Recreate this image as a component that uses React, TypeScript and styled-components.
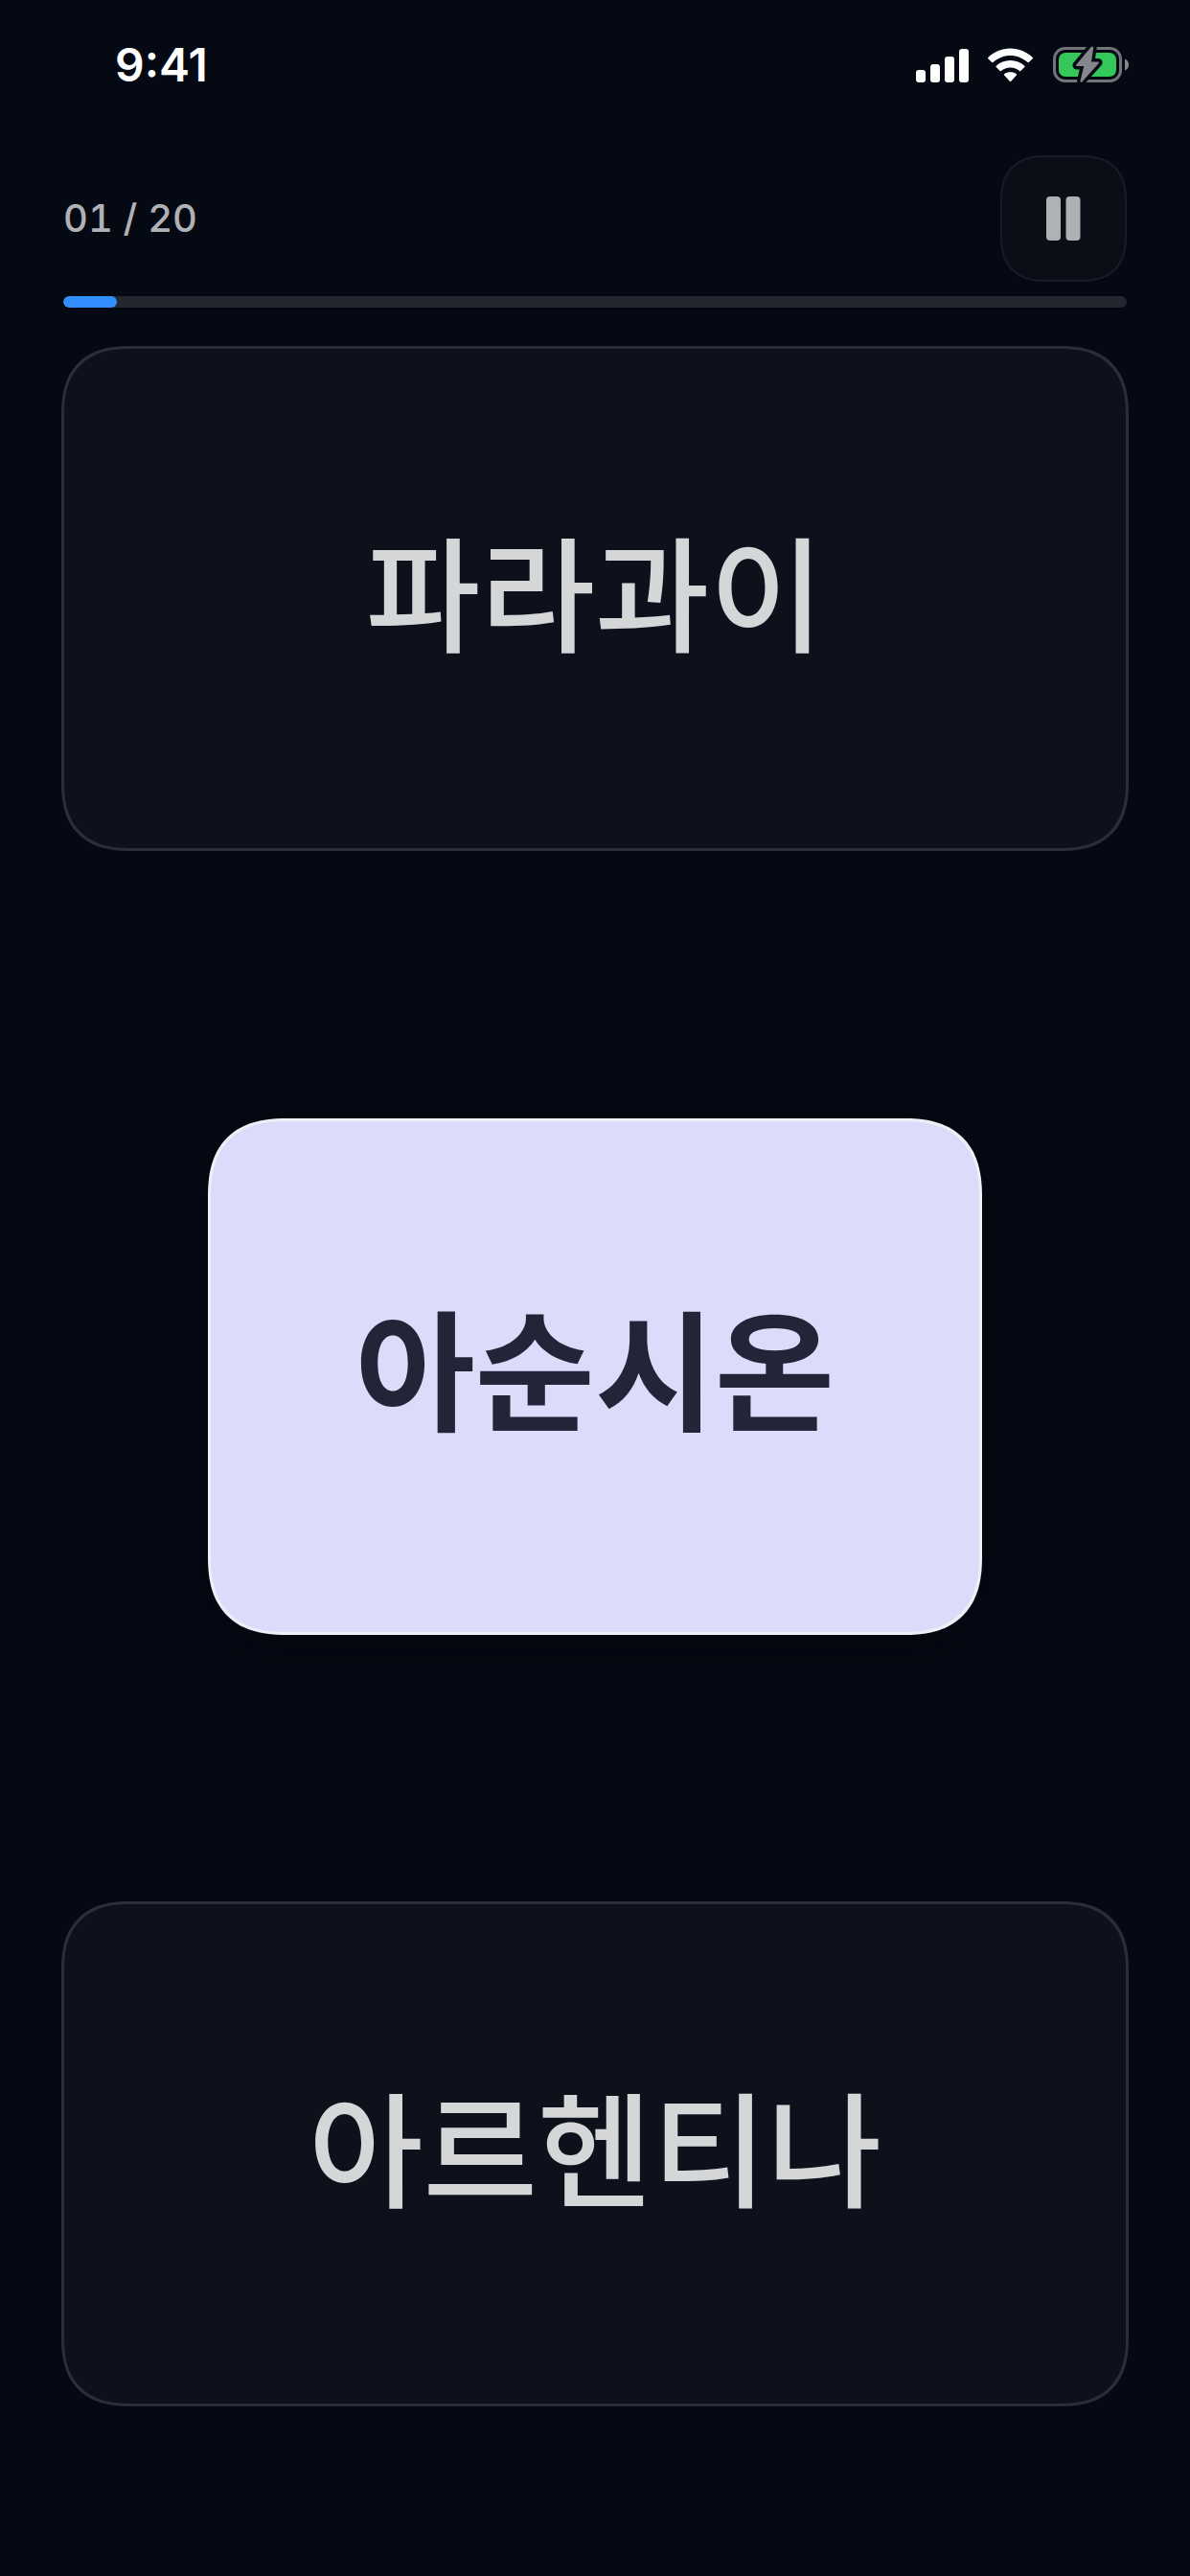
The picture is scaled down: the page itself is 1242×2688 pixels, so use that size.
import React from "react";
import styled, { createGlobalStyle } from "styled-components";

const GlobalStyle = createGlobalStyle`
  *, *::before, *::after { box-sizing: border-box; }
  body {
    margin: 0;
    background: #050913;
    font-family: Inter, "Noto Sans CJK KR", sans-serif;
    -webkit-font-smoothing: antialiased;
  }
`;

const Screen = styled.div`
  display: flex;
  flex-direction: column;
  min-height: 100vh;
  background: #050913;
`;

const StatusBar = styled.header`
  display: flex;
  align-items: center;
  justify-content: space-between;
  height: 136px;
  padding: 0 63px 0 120px;
`;

const Clock = styled.time`
  color: #ffffff;
  font-size: 48px;
  font-weight: 600;
  line-height: 56px;
`;

const StatusIcons = styled.div`
  display: flex;
  align-items: center;
  gap: 19px;
`;

const Header = styled.section`
  display: flex;
  flex-direction: column;
  gap: 15px;
  padding: 26px 66px 40px;
`;

const HeaderRow = styled.div`
  display: flex;
  align-items: center;
  justify-content: space-between;
`;

const Counter = styled.p`
  margin: 0;
  color: #b0b1b5;
  font-size: 40px;
  font-weight: 500;
  line-height: 48px;
  font-variant-numeric: tabular-nums;
`;

const PauseButton = styled.button`
  display: flex;
  align-items: center;
  justify-content: center;
  width: 132px;
  height: 132px;
  padding: 0;
  border: 2px solid #191c26;
  border-radius: 40px;
  background: #0a0e16;
  color: #b0b1b5;
  cursor: pointer;

  @supports (corner-shape: superellipse(1.3)) {
    border-radius: 48px;
    corner-shape: superellipse(1.3);
  }
`;

const Track = styled.div`
  height: 12px;
  border-radius: 6px;
  background: #24272f;
  overflow: hidden;
`;

const Fill = styled.div`
  height: 100%;
  border-radius: 6px;
  background: #338fff;
`;

const Board = styled.main`
  display: flex;
  flex: 1;
  flex-direction: column;
  align-items: center;
  justify-content: space-between;
  gap: 48px;
  padding: 0 64px 177px;
`;

const AnswerCard = styled.button`
  display: flex;
  align-items: center;
  justify-content: center;
  width: 100%;
  height: 527px;
  padding: 0 48px 24px;
  border: 3px solid #2b2e38;
  border-radius: 60px;
  background: #0d111b;
  color: #d4d6d8;
  font-family: "Noto Sans CJK KR", sans-serif;
  font-size: 130px;
  font-weight: 500;
  line-height: 188px;
  cursor: pointer;

  @supports (corner-shape: superellipse(1.3)) {
    border-radius: 72px;
    corner-shape: superellipse(1.3);
  }
`;

const PromptCard = styled.article`
  display: flex;
  align-items: center;
  justify-content: center;
  min-width: 808px;
  height: 539px;
  padding: 0 48px 24px;
  border: 3px solid #efeff8;
  border-radius: 68px;
  background: #dcdbfa;
  box-shadow: 0 12px 36px rgba(4, 4, 10, 0.4);

  @supports (corner-shape: superellipse(1.3)) {
    border-radius: 82px;
    corner-shape: superellipse(1.3);
  }
`;

const PromptText = styled.h1`
  margin: 0;
  color: #242439;
  font-family: "Noto Sans CJK KR", sans-serif;
  font-size: 136px;
  font-weight: 700;
  line-height: 200px;
`;

function SignalIcon() {
  return (
    <svg width="55" height="36" viewBox="0 0 55 36" fill="#fff" aria-hidden="true">
      <rect x="0" y="23" width="10" height="13" rx="3" />
      <rect x="15" y="17" width="10" height="19" rx="3" />
      <rect x="30" y="9" width="10" height="27" rx="3" />
      <rect x="45" y="1" width="10" height="35" rx="3" />
    </svg>
  );
}

function WifiIcon() {
  return (
    <svg width="49" height="36" viewBox="0 0 49 36" fill="#fff" aria-hidden="true">
      <path d="M24.500 8C31.500 8 37.800 10.700 42.600 15.100Q43.200 15.600 43.800 15L47.700 11.200Q48.400 10.500 47.700 9.900C41.600 4.100 33.400 0.500 24.500 0.500S7.400 4.100 1.300 9.900Q0.600 10.500 1.300 11.200L5.200 15Q5.800 15.600 6.400 15.100C11.200 10.700 17.500 8 24.500 8Z" />
      <path d="M24.500 20.500C28.200 20.500 31.500 21.800 34.100 24.100Q34.700 24.600 35.300 24L39.300 20.100Q40 19.400 39.300 18.800C35.400 15.200 30.200 13 24.500 13S13.600 15.200 9.700 18.800Q9 19.400 9.700 20.100L13.700 24Q14.300 24.600 14.900 24.100C17.500 21.800 20.800 20.500 24.500 20.500Z" />
      <path d="M30.900 28.500Q31.600 27.800 30.800 27.200C29 25.900 26.900 25.300 24.500 25.300S20 25.900 18.200 27.200Q17.400 27.800 18.100 28.500L23.800 34.700Q24.500 35.400 25.200 34.700Z" />
    </svg>
  );
}

const BOLT =
  "M40.500 1.200L25.300 19.400Q24.300 21 26 21H33.200L29.500 36.300Q29.500 38.600 31.500 37.200L48.600 18.200Q49.800 16.600 48 16.500H41L43.200 2Q42.800 -0.500 40.500 1.200Z";

function BatteryIcon() {
  return (
    <svg width="81" height="40" viewBox="0 0 81 40" aria-hidden="true">
      <rect x="2.500" y="2.500" width="69" height="34" rx="11" fill="none" stroke="#73747b" strokeWidth="3" />
      <path d="M76 13.500C78.500 14.500 80 16.700 80 19.500S78.500 24.500 76 25.500Z" fill="#85868c" />
      <rect x="7" y="7" width="60" height="25" rx="7" fill="#34c85a" />
      <path d={BOLT} fill="#050913" stroke="#050913" strokeWidth="7" strokeLinejoin="round" />
      <path d={BOLT} fill="#85868c" />
    </svg>
  );
}

function PauseIcon() {
  return (
    <svg width="36" height="46" viewBox="0 0 36 46" fill="currentColor" aria-hidden="true">
      <rect x="0" y="0" width="15" height="46" rx="4" />
      <rect x="20.500" y="0" width="15" height="46" rx="4" />
    </svg>
  );
}

const CURRENT = 1;
const TOTAL = 20;

export default function App() {
  return (
    <Screen lang="ko">
      <GlobalStyle />
      <StatusBar>
        <Clock>9:41</Clock>
        <StatusIcons>
          <SignalIcon />
          <WifiIcon />
          <BatteryIcon />
        </StatusIcons>
      </StatusBar>
      <Header>
        <HeaderRow>
          <Counter>
            {String(CURRENT).padStart(2, "0")} / {TOTAL}
          </Counter>
          <PauseButton type="button">
            <PauseIcon />
          </PauseButton>
        </HeaderRow>
        <Track role="progressbar" aria-valuenow={CURRENT} aria-valuemin={0} aria-valuemax={TOTAL}>
          <Fill style={{ width: `${(CURRENT / TOTAL) * 100}%` }} />
        </Track>
      </Header>
      <Board>
        <AnswerCard type="button">파라과이</AnswerCard>
        <PromptCard>
          <PromptText>아순시온</PromptText>
        </PromptCard>
        <AnswerCard type="button">아르헨티나</AnswerCard>
      </Board>
    </Screen>
  );
}
